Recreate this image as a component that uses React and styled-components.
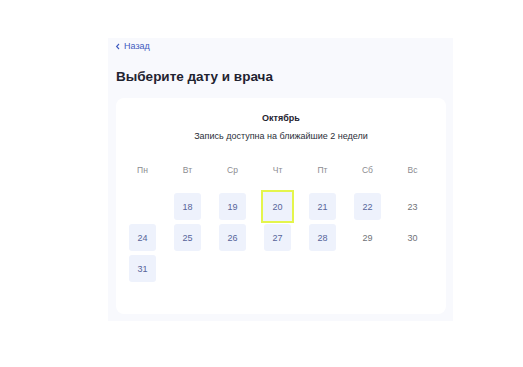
import React from "react";
import styled, { createGlobalStyle } from "styled-components";

const Global = createGlobalStyle`
  html, body { margin: 0; padding: 0; background: #ffffff; }
  body { font-family: "Liberation Sans", Arial, sans-serif; }
`;

const Page = styled.div`
  padding: 38px 0 0 108px;
`;

const Panel = styled.div`
  width: 345px;
  height: 283px;
  box-sizing: border-box;
  background: #f8f9fd;
  padding: 3px 7px 0 8px;
  display: flex;
  flex-direction: column;
`;

const Back = styled.a`
  display: flex;
  align-items: center;
  gap: 3px;
  height: 11px;
  margin-left: -1px;
  font-size: 9px;
  line-height: 11px;
  color: #3f5bc0;
  text-decoration: none;
`;

const Title = styled.h1`
  margin: 16px 0 0;
  font-size: 13.5px;
  line-height: 17px;
  font-weight: 700;
  color: #1f2330;
`;

const Card = styled.div`
  margin-top: 13px;
  height: 216px;
  box-sizing: border-box;
  background: #ffffff;
  border-radius: 8px;
  padding: 14px 0 0 4px;
  display: flex;
  flex-direction: column;
`;

const Month = styled.div`
  text-align: center;
  font-size: 9px;
  line-height: 12px;
  font-weight: 700;
  color: #1f2330;
  padding-right: 4px;
`;

const Sub = styled.div`
  margin-top: 6px;
  text-align: center;
  font-size: 9px;
  line-height: 12px;
  color: #2b2f3a;
  padding-right: 4px;
`;

const Grid = styled.div`
  display: grid;
  grid-template-columns: repeat(7, 45px);
  justify-items: center;
  align-items: center;
`;

const WeekRow = styled(Grid)`
  margin-top: 22px;
  height: 12px;
`;

const Weekday = styled.div`
  font-size: 8.5px;
  line-height: 12px;
  color: #8c8c90;
`;

const Days = styled(Grid)`
  margin-top: 17px;
  grid-auto-rows: 27px;
  row-gap: 4px;
`;

const Day = styled.div`
  width: 27px;
  height: 27px;
  box-sizing: border-box;
  display: flex;
  align-items: center;
  justify-content: center;
  font-size: 9px;
  border-radius: 3px;
  color: ${(p) => (p.$available ? "#56649a" : "#707278")};
  background: ${(p) => (p.$available ? "#eef2fc" : "transparent")};
  outline: ${(p) => (p.$selected ? "2px solid #e4f54c" : "none")};
  outline-offset: 0;
  ${(p) => (p.$selected ? "width: 29px; height: 29px; border-radius: 0;" : "")}
`;

const weekdays = ["Пн", "Вт", "Ср", "Чт", "Пт", "Сб", "Вс"];

const days = [
  null,
  { n: 18, a: true },
  { n: 19, a: true },
  { n: 20, a: true, s: true },
  { n: 21, a: true },
  { n: 22, a: true },
  { n: 23 },
  { n: 24, a: true },
  { n: 25, a: true },
  { n: 26, a: true },
  { n: 27, a: true },
  { n: 28, a: true },
  { n: 29 },
  { n: 30 },
  { n: 31, a: true },
];

export default function App() {
  return (
    <>
      <Global />
      <Page>
        <Panel>
          <Back href="#">
            <svg width="6" height="7" viewBox="0 0 6 7">
              <path d="M4 1 L1.6 3.5 L4 6" fill="none" stroke="#3f5bc0" strokeWidth="1.1" />
            </svg>
            Назад
          </Back>
          <Title>Выберите дату и врача</Title>
          <Card>
            <Month>Октябрь</Month>
            <Sub>Запись доступна на ближайшие 2 недели</Sub>
            <WeekRow>
              {weekdays.map((w) => (
                <Weekday key={w}>{w}</Weekday>
              ))}
            </WeekRow>
            <Days>
              {days.map((d, i) =>
                d ? (
                  <Day key={i} $available={d.a} $selected={d.s}>
                    {d.n}
                  </Day>
                ) : (
                  <span key={i} />
                )
              )}
            </Days>
          </Card>
        </Panel>
      </Page>
    </>
  );
}
